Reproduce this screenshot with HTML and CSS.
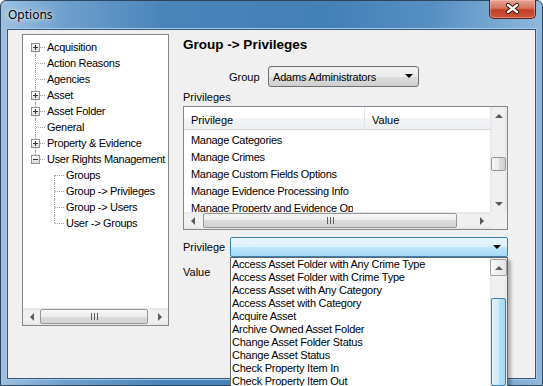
FILE: index.html
```html
<!DOCTYPE html>
<html lang="en">
<head>
    <meta charset="UTF-8">
    <title>Options</title>
    <link rel="stylesheet" href="styles.css">
</head>
<body>
    <div class="window">
        <div class="titlebar">
            <span class="title">Options</span>
            <div class="close">
                <svg width="45" height="18" viewBox="0 0 45 18">
                    <path d="M18 5 L27 12 M27 5 L18 12" stroke="#3a1208" stroke-width="4.2" stroke-linecap="round" fill="none"/>
                    <path d="M18 5 L27 12 M27 5 L18 12" stroke="#fff" stroke-width="2.4" stroke-linecap="round" fill="none"/>
                </svg>
            </div>
        </div>

        <div class="client">
            <!-- options tree -->
            <div class="tree">
                <div class="tree-items">
                    <div class="node first"><span class="gut"><span class="exp plus"></span></span>Acquisition</div>
                    <div class="node"><span class="gut"></span>Action Reasons</div>
                    <div class="node"><span class="gut"></span>Agencies</div>
                    <div class="node"><span class="gut"><span class="exp plus"></span></span>Asset</div>
                    <div class="node"><span class="gut"><span class="exp plus"></span></span>Asset Folder</div>
                    <div class="node"><span class="gut"></span>General</div>
                    <div class="node"><span class="gut"><span class="exp plus"></span></span>Property &amp; Evidence</div>
                    <div class="node last"><span class="gut"><span class="exp"></span></span>User Rights Management</div>
                    <div class="node child first"><span class="gut"></span>Groups</div>
                    <div class="node child"><span class="gut"></span>Group -&gt; Privileges</div>
                    <div class="node child"><span class="gut"></span>Group -&gt; Users</div>
                    <div class="node child last"><span class="gut"></span>User -&gt; Groups</div>
                </div>
                <div class="hscroll">
                    <span class="sb-btn"><span class="tri left"></span></span>
                    <div class="sb-track"><div class="thumb tree-thumb"><span class="grip"></span></div></div>
                    <span class="sb-btn"><span class="tri right"></span></span>
                </div>
            </div>

            <!-- page -->
            <div class="panel">
                <div class="heading">Group -&gt; Privileges</div>

                <div class="field group-row">
                    <label class="field-label">Group</label>
                    <div class="combo group-combo">Adams Administrators<span class="combo-arrow"></span></div>
                </div>

                <div class="caption">Privileges</div>

                <div class="listview">
                    <div class="lv-main">
                        <div class="lv-body">
                            <div class="lv-header">
                                <div class="col col1">Privilege</div>
                                <div class="col col2">Value</div>
                            </div>
                            <div class="lv-rows">
                                <div class="lv-row"><span class="col1">Manage Categories</span></div>
                                <div class="lv-row"><span class="col1">Manage Crimes</span></div>
                                <div class="lv-row"><span class="col1">Manage Custom Fields Options</span></div>
                                <div class="lv-row"><span class="col1">Manage Evidence Processing Info</span></div>
                                <div class="lv-row"><span class="col1">Manage Property and Evidence Options</span></div>
                            </div>
                        </div>
                        <div class="vscroll">
                            <span class="sb-btn"><span class="tri up"></span></span>
                            <div class="sb-track"><div class="thumb lv-vthumb"></div></div>
                            <span class="sb-btn"><span class="tri down"></span></span>
                        </div>
                    </div>
                    <div class="lv-bottom">
                        <div class="hscroll">
                            <span class="sb-btn"><span class="tri left"></span></span>
                            <div class="sb-track"><div class="thumb lv-hthumb"><span class="grip"></span></div></div>
                            <span class="sb-btn"><span class="tri right"></span></span>
                        </div>
                        <div class="corner"></div>
                    </div>
                </div>

                <div class="field priv-row">
                    <label class="field-label">Privilege</label>
                    <div class="combo hot">
                        <span class="combo-arrow"></span>
                        <div class="dropdown">
                            <div class="dd-items">
                                <div class="dd-item">Access Asset Folder with Any Crime Type</div>
                                <div class="dd-item">Access Asset Folder with Crime Type</div>
                                <div class="dd-item">Access Asset with Any Category</div>
                                <div class="dd-item">Access Asset with Category</div>
                                <div class="dd-item">Acquire Asset</div>
                                <div class="dd-item">Archive Owned Asset Folder</div>
                                <div class="dd-item">Change Asset Folder Status</div>
                                <div class="dd-item">Change Asset Status</div>
                                <div class="dd-item">Check Property Item In</div>
                                <div class="dd-item">Check Property Item Out</div>
                            </div>
                            <div class="vscroll dd-scroll">
                                <span class="sb-btn boxed"><span class="tri up"></span></span>
                                <div class="sb-track"><div class="thumb dd-thumb"></div></div>
                            </div>
                        </div>
                    </div>
                </div>

                <div class="caption value-label">Value</div>
            </div>
        </div>
    </div>
</body>
</html>
```

FILE: styles.css
```css
html, body {
    margin: 0;
    padding: 0;
}

body {
    width: 543px;
    height: 386px;
    overflow: hidden;
    font-family: "Liberation Sans", Arial, sans-serif;
    font-size: 11px;
    color: #000;
    background: #fff;
}

/* window frame */
.window {
    height: 386px;
    box-sizing: border-box;
    display: flex;
    flex-direction: column;
    padding: 0 6px 6px;
    border: 1px solid #2c4660;
    border-radius: 6px 6px 0 0;
    background: linear-gradient(to right, #9dc1e1 0%, #6d9fcc 12%, #4a85ba 30%, #4380b6 60%, #5790c3 80%, #8fb9dc 100%);
}

.titlebar {
    height: 28px;
    display: flex;
    justify-content: space-between;
    align-items: flex-start;
    flex: none;
}

.title {
    font-family: "Noto Sans", "Open Sans", sans-serif;
    font-size: 12px;
    line-height: 28px;
    padding-left: 1px;
    text-shadow: 0 0 6px rgba(255, 255, 255, 0.9), 0 0 2px rgba(255, 255, 255, 0.8);
}

.close {
    width: 45px;
    height: 18px;
    margin-top: -1px;
    border: 1px solid #5a2016;
    border-top: none;
    border-radius: 0 0 5px 5px;
    background: linear-gradient(#e7a596 0%, #d6735f 45%, #c24128 55%, #c8533a 100%);
    box-shadow: inset 0 0 0 1px rgba(255, 200, 190, 0.45);
}

.close svg {
    display: block;
}

.client {
    flex: 1;
    display: flex;
    align-items: flex-start;
    padding: 4px 0 0 14px;
    background: #f0f0f0;
    border: 1px solid #34587d;
    box-shadow: 0 0 0 1px #a9c7e3;
}

/* tree */
.tree {
    width: 147px;
    height: 292px;
    box-sizing: border-box;
    display: flex;
    flex-direction: column;
    border: 1px solid #828790;
    background: #fff;
}

.tree-items {
    flex: 1;
    padding-top: 4px;
}

.node {
    display: flex;
    align-items: center;
    height: 16px;
    white-space: nowrap;
    letter-spacing: -0.3px;
}

.node.child {
    padding-left: 19px;
}

.gut {
    position: relative;
    width: 24px;
    height: 16px;
    flex: none;
}

.gut::before {
    content: "";
    position: absolute;
    left: 12px;
    top: 0;
    bottom: 0;
    border-left: 1px dotted #a0a0a0;
}

.gut::after {
    content: "";
    position: absolute;
    left: 13px;
    top: 8px;
    width: 9px;
    border-top: 1px dotted #a0a0a0;
}

.node.first .gut::before {
    top: 8px;
}

.node.last .gut::before {
    bottom: 8px;
}

.exp {
    position: absolute;
    left: 8px;
    top: 4px;
    width: 7px;
    height: 7px;
    z-index: 1;
    border: 1px solid #919191;
    background: linear-gradient(#fff, #dadada);
}

.exp::before {
    content: "";
    position: absolute;
    left: 1px;
    top: 3px;
    width: 5px;
    height: 1px;
    background: #1e395b;
}

.exp.plus::after {
    content: "";
    position: absolute;
    left: 3px;
    top: 1px;
    width: 1px;
    height: 5px;
    background: #1e395b;
}

/* scrollbars */
.hscroll {
    display: flex;
    height: 17px;
    flex: none;
    background: linear-gradient(#e6e6e6, #f0f0f0 20%, #f0f0f0 80%, #e6e6e6);
}

.vscroll {
    display: flex;
    flex-direction: column;
    width: 17px;
    flex: none;
    background: linear-gradient(to right, #e6e6e6, #f0f0f0 20%, #f0f0f0 80%, #e6e6e6);
}

.sb-btn {
    width: 17px;
    height: 17px;
    flex: none;
    display: flex;
    align-items: center;
    justify-content: center;
    box-sizing: border-box;
}

.sb-btn.boxed {
    border: 1px solid #a0a0a0;
    border-radius: 2px;
    background: linear-gradient(to right, #fafafa, #e4e4e4);
}

.sb-track {
    flex: 1;
    min-height: 0;
    overflow: hidden;
}

.tri {
    width: 0;
    height: 0;
}

.tri.left {
    border-top: 4px solid transparent;
    border-bottom: 4px solid transparent;
    border-right: 4px solid #5a5a5a;
}

.tri.right {
    border-top: 4px solid transparent;
    border-bottom: 4px solid transparent;
    border-left: 4px solid #5a5a5a;
}

.tri.up {
    border-left: 4px solid transparent;
    border-right: 4px solid transparent;
    border-bottom: 4px solid #5a5a5a;
}

.tri.down {
    border-left: 4px solid transparent;
    border-right: 4px solid transparent;
    border-top: 4px solid #5a5a5a;
}

.thumb {
    box-sizing: border-box;
    border: 1px solid #979797;
    border-radius: 2px;
    display: flex;
    align-items: center;
    justify-content: center;
}

.hscroll .thumb {
    height: 15px;
    margin-top: 1px;
    background: linear-gradient(#f7f7f7, #ececec 50%, #dcdcdc 50%, #d2d2d2);
}

.vscroll .thumb {
    width: 15px;
    margin-left: 1px;
    background: linear-gradient(to right, #f7f7f7, #ececec 50%, #dcdcdc 50%, #d2d2d2);
}

.grip {
    width: 7px;
    height: 7px;
    background: linear-gradient(to right, #5f5f5f 1px, transparent 1px) 0 0 / 3px 7px repeat-x;
}

.tree-thumb {
    width: 108px;
}

.lv-vthumb {
    height: 14px;
    margin-top: 33px;
}

.lv-hthumb {
    width: 254px;
    margin-left: 2px;
}

/* right side */
.panel {
    width: 325px;
    margin-left: 14px;
    display: flex;
    flex-direction: column;
}

.heading {
    font-size: 13.5px;
    font-weight: bold;
    line-height: 16px;
    margin-top: 3px;
}

.field {
    display: flex;
    align-items: center;
}

.field-label {
    flex: none;
}

.group-row {
    margin-top: 13px;
    padding-left: 46px;
}

.group-row .field-label {
    width: 39px;
}

.combo {
    position: relative;
    box-sizing: border-box;
    height: 21px;
    display: flex;
    align-items: center;
    padding-left: 4px;
    border: 1px solid #707070;
    border-radius: 3px;
    background: linear-gradient(#f2f2f2 0%, #ebebeb 50%, #dddddd 50%, #cfcfcf 100%);
    letter-spacing: -0.2px;
}

.group-combo {
    width: 151px;
}

.combo-arrow {
    position: absolute;
    right: 5px;
    top: 7px;
    border-left: 4px solid transparent;
    border-right: 4px solid transparent;
    border-top: 4px solid #000;
}

.caption {
    line-height: 14px;
    margin-top: 3px;
}

/* list view */
.listview {
    margin-top: 2px;
    height: 124px;
    box-sizing: border-box;
    border: 1px solid #828790;
    background: #fff;
    display: flex;
    flex-direction: column;
}

.lv-main {
    flex: 1;
    display: flex;
    min-height: 0;
}

.lv-body {
    flex: 1;
    overflow: hidden;
}

.lv-header {
    display: flex;
    height: 23px;
    box-sizing: border-box;
    border-bottom: 1px solid #d5d5d5;
    background: linear-gradient(#ffffff 0%, #ffffff 50%, #f3f4f6 50%, #eef0f3 100%);
}

.lv-header .col {
    display: flex;
    align-items: center;
    padding-left: 7px;
    padding-top: 3px;
    box-sizing: border-box;
}

.lv-header .col1 {
    width: 181px;
    border-right: 1px solid #e3e8ee;
}

.lv-rows {
    padding-top: 2px;
}

.lv-row {
    height: 17px;
    line-height: 17px;
    white-space: nowrap;
    letter-spacing: -0.3px;
}

.lv-row .col1 {
    display: block;
    width: 162px;
    padding-left: 7px;
    overflow: hidden;
}

.lv-bottom {
    display: flex;
    flex: none;
}

.lv-bottom .hscroll {
    flex: 1;
}

.corner {
    width: 17px;
    height: 17px;
    background: #f0f0f0;
}

/* privilege combo, dropped */
.priv-row {
    margin-top: 7px;
}

.priv-row .field-label {
    width: 47px;
}

.combo.hot {
    flex: 1;
    height: 20px;
    border-color: #3c7fb1;
    border-radius: 2px;
    background: linear-gradient(#eaf6fd 0%, #d9f0fc 50%, #bee6fd 50%, #a7d9f5 100%);
}

.combo.hot .combo-arrow {
    right: 6px;
    top: 7px;
}

.dropdown {
    position: absolute;
    top: calc(100% + 1px);
    left: -1px;
    right: -1px;
    height: 129px;
    z-index: 5;
    display: flex;
    box-sizing: border-box;
    border: 1px solid #646464;
    border-bottom: none;
    background: #fff;
    box-shadow: 3px 3px 3px rgba(0, 0, 0, 0.28);
    overflow: hidden;
}

.dd-items {
    flex: 1;
    padding-left: 1px;
    white-space: nowrap;
    overflow: hidden;
}

.dd-item {
    height: 13px;
    line-height: 13px;
    letter-spacing: -0.25px;
}

.dd-scroll {
    padding-top: 1px;
}

.dd-thumb {
    height: 88px;
    margin-top: 22px;
}

.vscroll .dd-thumb {
    border-color: #3c7fb1;
    background: linear-gradient(to right, #e3f4fc, #cbe9f9 50%, #b3e0f8 50%, #a6d9f4);
}

.value-label {
    margin-top: 8px;
}
```
